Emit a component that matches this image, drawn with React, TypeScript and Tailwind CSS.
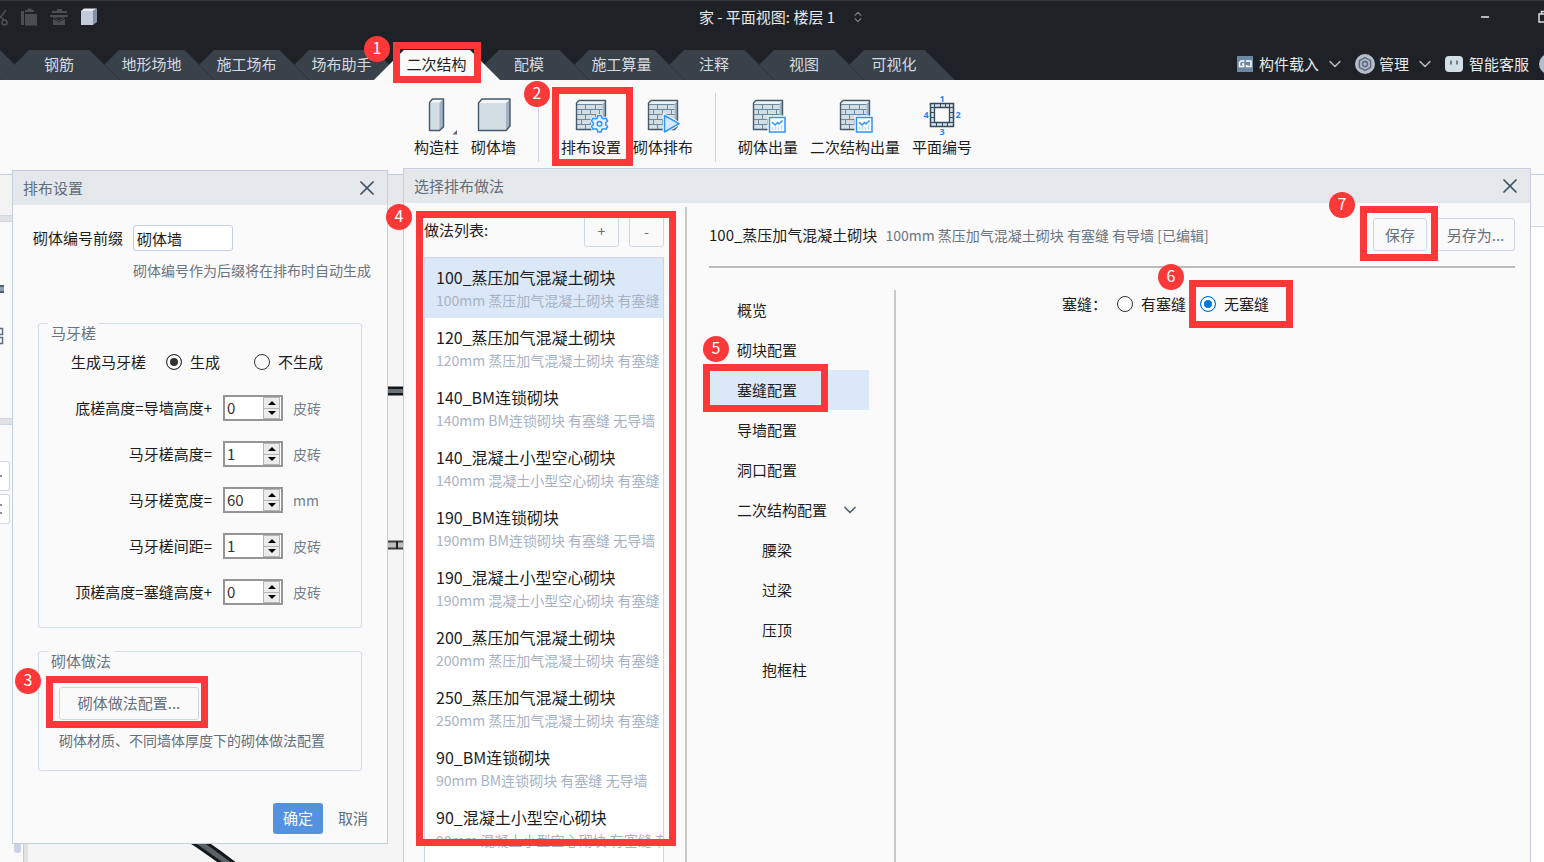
import { useState } from "react";
import type { ReactNode } from "react";
import { ChevronDown, ChevronsUpDown, X } from "lucide-react";

const tabs = ["钢筋", "地形场地", "施工场布", "场布助手", "二次结构", "配模", "施工算量", "注释", "视图", "可视化"];

const methods = [
  { name: "100_蒸压加气混凝土砌块", desc: "100mm 蒸压加气混凝土砌块 有塞缝 有导墙" },
  { name: "120_蒸压加气混凝土砌块", desc: "120mm 蒸压加气混凝土砌块 有塞缝 有导墙" },
  { name: "140_BM连锁砌块", desc: "140mm BM连锁砌块 有塞缝 无导墙" },
  { name: "140_混凝土小型空心砌块", desc: "140mm 混凝土小型空心砌块 有塞缝 有导墙" },
  { name: "190_BM连锁砌块", desc: "190mm BM连锁砌块 有塞缝 无导墙" },
  { name: "190_混凝土小型空心砌块", desc: "190mm 混凝土小型空心砌块 有塞缝 有导墙" },
  { name: "200_蒸压加气混凝土砌块", desc: "200mm 蒸压加气混凝土砌块 有塞缝 有导墙" },
  { name: "250_蒸压加气混凝土砌块", desc: "250mm 蒸压加气混凝土砌块 有塞缝 有导墙" },
  { name: "90_BM连锁砌块", desc: "90mm BM连锁砌块 有塞缝 无导墙" },
  { name: "90_混凝土小型空心砌块", desc: "90mm 混凝土小型空心砌块 有塞缝 有导墙" },
];

const sections = [
  { label: "概览" },
  { label: "砌块配置" },
  { label: "塞缝配置" },
  { label: "导墙配置" },
  { label: "洞口配置" },
  { label: "二次结构配置", open: true },
  { label: "腰梁", child: true },
  { label: "过梁", child: true },
  { label: "压顶", child: true },
  { label: "抱框柱", child: true },
];

const spinRows = [
  { id: "bottom", label: "底槎高度=导墙高度+", value: 0, unit: "皮砖" },
  { id: "height", label: "马牙槎高度=", value: 1, unit: "皮砖" },
  { id: "width", label: "马牙槎宽度=", value: 60, unit: "mm" },
  { id: "gap", label: "马牙槎间距=", value: 1, unit: "皮砖" },
  { id: "top", label: "顶槎高度=塞缝高度+", value: 0, unit: "皮砖" },
];

const ghostButton = "rounded-[3px] border border-[#cfd7e5] bg-[#fafafa] text-[#66707d] hover:bg-white";

// Red outline and step number, placed relative to the control they point at
function Mark({ className }: { className: string }) {
  return <span className={"pointer-events-none absolute z-10 border-[7px] border-[#fc3838] " + className} />;
}

function Badge({ n, className }: { n: number; className: string }) {
  return (
    <span
      className={
        "pointer-events-none absolute z-10 flex size-[26px] items-center justify-center rounded-full bg-[#fc3838] pb-1 text-base leading-6 text-white " +
        className
      }
    >
      {n}
    </span>
  );
}

/* ---------- icons ---------- */

function Column() {
  return (
    <svg viewBox="0 0 36 36" className="size-9 overflow-visible">
      <path d="M14 2h10v28l-3.500 3.500H10.500V5.500z" fill="#d3dde4" />
      <path d="M20.500 5.500 24.500 2v28l-4 3.500z" fill="#9fb3c3" />
      <path d="M10.500 5.500 14 2h10.500l-4 3.500z" fill="#f3f6f8" />
      <path d="M10.500 5.500 13.500 2h11v28l-4 3.500h-10z" fill="none" stroke="#45596b" strokeWidth="1.400" strokeLinejoin="round" />
      <path d="M38 33v4.500h-4.500z" fill="#5d6773" />
    </svg>
  );
}

function Block() {
  return (
    <svg viewBox="0 0 36 36" className="size-9">
      <path d="M2.500 6h28v27.500h-28z" fill="#d3dde4" />
      <path d="M30 6l4-4v27l-4 4.500z" fill="#9fb3c3" />
      <path d="M2.500 5.500 6 2h28l-4 3.500z" fill="#f3f6f8" />
      <path d="M2.500 6 6 2h28v27l-4 4.500H2.500z" fill="none" stroke="#45596b" strokeWidth="1.400" strokeLinejoin="round" />
    </svg>
  );
}

function Bricks({ children }: { children?: ReactNode }) {
  return (
    <svg viewBox="0 0 36 36" className="size-9">
      <path d="M3.500 6.500h26v26h-26z" fill="#d3dde4" />
      <path d="M29.500 6.500 32.500 4v25.500l-3 3z" fill="#9fb3c3" />
      <path d="M3.500 6.500 6 3.500h26.500l-3 3z" fill="#f3f6f8" />
      <path
        d="M3.500 7.500h26M3.500 12.500h26M3.500 17.500h26M3.500 22.500h26M3.500 27.500h26M12.500 7.500v5M22.500 7.500v5M8.500 12.500v5M17.500 12.500v5M26.500 12.500v5M12.500 17.500v5M22.500 17.500v5M8.500 22.500v5M17.500 22.500v5M26.500 22.500v5M12.500 27.500v5M22.500 27.500v5"
        fill="none"
        stroke="#6f889c"
      />
      <path d="M3.500 6 6 3.500h26.500v26l-3 3h-26z" fill="none" stroke="#45596b" strokeWidth="1.400" strokeLinejoin="round" />
      {children}
    </svg>
  );
}

function BricksGear() {
  return (
    <Bricks>
      <path
        d="M24.800 18.500h3.400l.6 2.500 1.600.9 2.500-.8 1.700 2.900-1.900 1.800v1.900l1.900 1.800-1.700 2.900-2.500-.8-1.600.9-.6 2.500h-3.400l-.6-2.500-1.600-.9-2.500.8-1.700-2.900 1.900-1.800v-1.900l-1.900-1.800 1.700-2.900 2.500.8 1.600-.9z"
        fill="#e4f1ff"
        stroke="#fafafa"
        strokeWidth="3"
      />
      <path
        d="M24.800 18.500h3.400l.6 2.500 1.600.9 2.500-.8 1.700 2.900-1.900 1.800v1.900l1.900 1.800-1.700 2.900-2.500-.8-1.600.9-.6 2.500h-3.400l-.6-2.500-1.600-.9-2.500.8-1.700-2.900 1.900-1.800v-1.900l-1.900-1.800 1.700-2.900 2.500.8 1.600-.9z"
        fill="#e4f1ff"
        stroke="#2f93fb"
        strokeWidth="1.500"
        strokeLinejoin="round"
      />
      <circle cx="26.500" cy="26.800" r="2.300" fill="#fff" stroke="#2f93fb" strokeWidth="1.500" />
    </Bricks>
  );
}

function BricksPlay() {
  return (
    <Bricks>
      <path d="M19.500 18.500 34 26.700 19.500 35z" fill="#d6eaff" stroke="#fafafa" strokeWidth="3.500" />
      <path d="M19.500 18.500 34 26.700 19.500 35z" fill="#d6eaff" stroke="#2f93fb" strokeWidth="1.500" strokeLinejoin="round" />
    </Bricks>
  );
}

function BricksChart() {
  return (
    <Bricks>
      <path d="M18.500 19.500h17v16h-17z" fill="#fff" stroke="#fafafa" strokeWidth="2" />
      <path d="M19.500 20.500h15.500v14.500H19.500z" fill="#fff" stroke="#2f93fb" strokeWidth="1.500" />
      <path d="M22.500 30v3M25.500 29v4M28.500 30v3M31.500 28v5" stroke="#b9dbff" strokeWidth="1.500" />
      <path d="m22 25 3 3 2.500-2.500 1.500 1.500 3.500-3.500" fill="none" stroke="#2f93fb" strokeWidth="1.500" />
    </Bricks>
  );
}

function PlanNumber() {
  return (
    <svg viewBox="0 0 36 36" className="size-9 overflow-visible">
      <path d="M6.500 6.500h23v23h-23z" fill="#d3dde4" stroke="#34495c" strokeWidth="1.500" />
      <path d="M10.500 10.500h15v15h-15z" fill="#fafafa" stroke="#34495c" strokeWidth="1.300" />
      <path
        d="M10.500 6.500v4M16.500 6.500v4M21.500 6.500v4M25.500 6.500v4M12.500 25.500v4M18.500 25.500v4M23.500 25.500v4M6.500 10.500h4M6.500 15.500h4M6.500 20.500h4M6.500 25.500h4M25.500 10.500h4M25.500 15.500h4M25.500 20.500h4M25.500 25.500h4"
        stroke="#34495c"
      />
      <g fill="#1f87f5" fontSize="9" fontWeight="700" textAnchor="middle" fontFamily="Noto Sans, sans-serif">
        <text x="18" y="5">1</text>
        <text x="34" y="21">2</text>
        <text x="18" y="38">3</text>
        <text x="2" y="21">4</text>
      </g>
    </svg>
  );
}

/* ---------- header ---------- */

function QuickTools() {
  return (
    <svg viewBox="0 0 100 20" className="h-5 w-[100px]">
      <g fill="none" stroke="#4d5154" strokeWidth="1.500">
        <path d="M6 3 0 11M0 9l4 4" />
        <circle cx="4.500" cy="15.500" r="2.500" />
      </g>
      <g fill="#4a4d50">
        <path d="M21 4h3v14h-3zM25 3h9v2h-9zM27.500 1.500h4v2h-4zM25 7h12v11.500H25z" />
        <path d="M52 4h15v2H52zM57 2h5v2h-5zM50 8h18v2H50zM53 12l6 3 6-3v6H53z" />
      </g>
      <path d="M53 10h12l-6 4z" fill="none" stroke="#4a4d50" />
      <path d="M81 4h12v14H81z" fill="#c3cbdb" />
      <path d="m81 4 3-2.500h13L93 4z" fill="#e6eaf1" />
      <path d="m93 4 4-2.500V15l-4 3z" fill="#8492a8" />
    </svg>
  );
}

function Tab({ label, active, z, onClick }: { label: string; active: boolean; z: number; onClick: () => void }) {
  const width = label.length > 3 ? "w-[126px]" : "w-[121px]";
  return (
    <div className={"relative -ml-[31px] h-[30px] " + width} style={{ zIndex: z }}>
      <button
        onClick={onClick}
        className={
          "size-full pr-px [clip-path:polygon(30px_0,calc(100%-30px)_0,100%_100%,0_100%)] " +
          (active ? "bg-[#fafafa] text-[#1d1d1d]" : "bg-[#2c333b] text-[#d6dbe1]")
        }
      >
        <span
          className={
            "flex size-full items-center justify-center pb-[2px] [clip-path:polygon(30px_0,calc(100%-30px)_0,100%_100%,0_100%)] " +
            (active ? "bg-[#fafafa]" : "bg-[#39414a]")
          }
        >
          {label}
        </span>
      </button>
      {active && (
        <>
          <Mark className="inset-x-[19px] -top-2 -bottom-[3px]" />
          <Badge n={1} className="-left-[10px] -top-[14px]" />
        </>
      )}
    </div>
  );
}

function Header() {
  const [active, setActive] = useState("二次结构");
  return (
    <header className="relative z-20 flex h-20 flex-col justify-between border-t border-[#33393c] bg-[#1e2226] text-[#e8eaed]">
      <div className="grid h-8 grid-cols-[1fr_auto_1fr] items-center">
        <QuickTools />
        <div className="flex items-center gap-4 pl-5">
          <h1>家 - 平面视图: 楼层 1</h1>
          <ChevronsUpDown className="size-[14px] text-[#7d8287]" />
        </div>
        <div className="flex items-center justify-end gap-12">
          <button aria-label="最小化" className="flex h-4 w-2 items-center">
            <span className="h-[2px] w-2 bg-[#b5b8bb]" />
          </button>
          <button aria-label="还原" className="-mr-[7px]">
            <svg viewBox="0 0 14 14" className="size-[14px]" fill="none" stroke="#d8dadc" strokeWidth="1.500">
              <path d="M2 4h8v8H2zM4.500 4V1.500H13V10h-3" />
            </svg>
          </button>
        </div>
      </div>

      <div className="flex items-end">
        <div className="-ml-[91px] h-[30px] w-[121px] shrink-0 bg-[#39414a] [clip-path:polygon(30px_0,calc(100%-30px)_0,100%_100%,0_100%)]" />
        <nav className="isolate flex">
          {tabs.map((t, i) => (
            <Tab key={t} label={t} active={t === active} z={t === active ? 20 : tabs.length - i} onClick={() => setActive(t)} />
          ))}
        </nav>
        <div className="-mr-[15px] ml-auto flex h-8 items-center">
          <button className="flex items-center gap-[6px]">
            <svg viewBox="0 0 16 16" className="size-4">
              <path d="M0 0h16v16H0z" fill="#6d89a3" />
              <path d="M7.500 5H4L2.500 6.500v4h4V8H5M9 5h5v5.500h-4.500V9" fill="none" stroke="#fff" strokeWidth="1.500" />
            </svg>
            构件载入
          </button>
          <ChevronDown className="mx-[6px] size-5 text-[#b9bdc2]" strokeWidth={1.75} />
          <button className="ml-1 flex items-center gap-1">
            <svg viewBox="0 0 20 20" className="size-5">
              <circle cx="10" cy="10" r="10" fill="#b4bdcc" />
              <path d="m10 3.500 5.600 3.200v6.600L10 16.500l-5.600-3.200V6.700z" fill="#aab5c6" stroke="#5a6678" strokeWidth="1.300" />
              <circle cx="10" cy="10" r="2.500" fill="none" stroke="#5a6678" strokeWidth="1.300" />
            </svg>
            管理
          </button>
          <ChevronDown className="mx-[6px] size-5 text-[#b9bdc2]" strokeWidth={1.75} />
          <button className="ml-1 flex items-center gap-[6px]">
            <svg viewBox="0 0 18 16" className="h-4 w-[18px]">
              <rect width="18" height="16" rx="4" fill="#d3dfe6" />
              <path d="M6 4.500v4M12 4.500v4" stroke="#3c4650" strokeWidth="1.300" />
            </svg>
            智能客服
          </button>
          <span className="ml-[10px] size-5 rounded-full bg-[#b4bdcc]" />
        </div>
      </div>
    </header>
  );
}

function RibbonButton({ label, children, mark }: { label: string; children: ReactNode; mark?: boolean }) {
  return (
    <div className="relative">
      <button className="flex h-full flex-col items-center gap-1 px-[6px] pt-[17px] leading-5">
        {children}
        {label}
      </button>
      {mark && (
        <>
          <Mark className="-left-[3px] -right-[6px] bottom-2 top-[7px]" />
          <Badge n={2} className="-left-[31px] top-px" />
        </>
      )}
    </div>
  );
}

function Ribbon() {
  const divider = <span className="mx-4 mb-3 mt-[13px] w-px bg-[#cdd6e4]" />;
  return (
    <div className="relative flex h-[95px] shrink-0 border-b border-[#c5cde0] bg-[#fafafa] pl-[408px] text-[#1d1d1d]">
      <RibbonButton label="构造柱"><Column /></RibbonButton>
      <RibbonButton label="砌体墙"><Block /></RibbonButton>
      {divider}
      <RibbonButton label="排布设置" mark><BricksGear /></RibbonButton>
      <RibbonButton label="砌体排布"><BricksPlay /></RibbonButton>
      {divider}
      <RibbonButton label="砌体出量"><BricksChart /></RibbonButton>
      <RibbonButton label="二次结构出量"><BricksChart /></RibbonButton>
      <RibbonButton label="平面编号"><PlanNumber /></RibbonButton>
    </div>
  );
}

/* ---------- drawing area behind the dialogs ---------- */

function Workspace() {
  return (
    <div className="flex min-h-0 flex-1">
      <aside className="flex w-6 shrink-0 flex-col border-r border-[#c9cdd3] bg-[#fafafa]">
        <div className="h-10 bg-[#f3f3f3]" />
        <div className="h-[7px] border-y border-[#cfd7e5] bg-[#e2e2e2]" />
        <div className="h-[196px] pt-[63px]">
          <div className="h-2 w-1 border-y-2 border-[#4b6072] bg-[#8aa1b4]" />
          <svg viewBox="0 0 4 18" className="mt-[34px] h-[18px] w-1" fill="none" stroke="#5b7080" strokeWidth="1.500">
            <path d="M-3 1.500h5.500v6H-3zM-3 10.500h5.500v6H-3z" />
          </svg>
        </div>
        <div className="h-[7px] border-y border-[#cfd7e5] bg-[#e2e2e2]" />
        <div className="mt-9 flex h-[30px] w-[10px] items-center rounded-r-[3px] border border-l-0 border-[#cfd7e5] bg-white">
          <span className="h-[2px] w-[2px] bg-[#8b929a]" />
        </div>
        <div className="mt-[3px] flex h-[30px] w-[10px] items-center rounded-r-[3px] border border-l-0 border-[#cfd7e5] bg-white">
          <span className="h-[10px] w-[2px] border-y-2 border-[#8b929a]" />
        </div>
        <div className="mb-[9px] ml-[14px] mt-auto h-4 w-[7px] rounded-b-[3px] bg-[#cbd3e2]" />
      </aside>
      <main className="min-w-0 flex-1 overflow-hidden border-l-4 border-[#e2e2e2] bg-[#f5f5f5]">
        <div className="h-[30px] bg-[#e4e8eb]" />
        <svg viewBox="0 0 400 660" className="h-[660px] w-[400px]">
          <path d="M340 186h60" stroke="#15181a" strokeWidth="9" />
          <path d="M340 186h60" stroke="#6b7378" strokeWidth="4" />
          <path d="M340 340h60" stroke="#3c3f41" strokeWidth="9" />
          <path d="M340 340h60" stroke="#bfbfbf" strokeWidth="5" />
          <path d="M369 336v8" stroke="#222" strokeWidth="2" />
          <path d="M150 624q36 22 70 50" fill="none" stroke="#15181a" strokeWidth="11" />
          <path d="M150 624q36 22 70 50" fill="none" stroke="#5a6266" strokeWidth="5" />
        </svg>
      </main>
      <aside className="w-[30px] shrink-0 bg-white">
        <div className="h-[52px] border-b border-[#cfd7e5] bg-[#fafafa]" />
      </aside>
    </div>
  );
}

/* ---------- dialogs ---------- */

function DialogTitle({ title }: { title: string }) {
  return (
    <div className="flex h-[34px] shrink-0 items-center justify-between bg-[#e4e8eb] pl-[10px] pr-2 text-[#626c79]">
      <h2>{title}</h2>
      <button aria-label="关闭">
        <X className="size-6 text-[#3d5265]" strokeWidth={1.75} />
      </button>
    </div>
  );
}

function SpinBox({ id, initial }: { id: string; initial: number }) {
  const [value, setValue] = useState(initial);
  return (
    <div className="flex h-[26px] w-[60px] border-2 border-[#959595] bg-white">
      <input
        id={id}
        value={value}
        onChange={(e) => setValue(Number(e.target.value) || 0)}
        className="w-0 flex-1 pl-[2px] text-[#333] outline-none"
      />
      <div className="mr-px flex w-[17px] flex-col">
        <button aria-label="增加" onClick={() => setValue(value + 1)} className="flex flex-1 items-center justify-center border border-[#b5b5b5] bg-[#ececec]">
          <svg viewBox="0 0 8 4" className="h-1 w-2"><path d="m4 0 4 4H0z" /></svg>
        </button>
        <button aria-label="减少" onClick={() => setValue(value - 1)} className="flex flex-1 items-center justify-center border border-t-0 border-[#b5b5b5] bg-[#ececec]">
          <svg viewBox="0 0 8 4" className="h-1 w-2"><path d="m4 4 4-4H0z" /></svg>
        </button>
      </div>
    </div>
  );
}

function Radio({ name, label, checked, onChange, accent }: any) {
  return (
    <label className="flex items-center gap-2">
      <input
        type="radio"
        name={name}
        checked={checked}
        onChange={onChange}
        className={
          "size-4 appearance-none rounded-full border bg-white checked:shadow-[inset_0_0_0_3px_#fff] " +
          (accent
            ? "border-[#333] checked:border-[#0078d7] checked:bg-[#0078d7]"
            : "border-[#333] checked:bg-[#333]")
        }
      />
      {label}
    </label>
  );
}

function LayoutSettings() {
  const [teeth, setTeeth] = useState(true);
  return (
    <section className="absolute left-3 top-[170px] w-[376px] border border-[#c5cde0] bg-[#fafafa] text-[#1d1d1d]">
      <DialogTitle title="排布设置" />
      <div className="pl-5 pt-5">
        <div className="flex items-center gap-[10px]">
          <label htmlFor="prefix">砌体编号前缀</label>
          <input id="prefix" defaultValue="砌体墙" className="h-[26px] w-[100px] rounded-[3px] border border-[#c5cfe3] bg-white px-[3px]" />
        </div>
        <p className="ml-[100px] mt-[9px] text-sm text-[#6b7582]">砌体编号作为后缀将在排布时自动生成</p>
      </div>

      <fieldset className="mx-[25px] mt-[23px] min-w-0 rounded-[3px] border border-[#d3daea] pb-[22px]">
        <legend className="ml-[9px] px-[3px] pt-5 leading-5 text-[#6b7582]">马牙槎</legend>
        <div className="flex flex-col gap-5 pl-8 pt-[6px]">
          <div className="flex h-[26px] items-center">
            <span className="mr-5">生成马牙槎</span>
            <Radio name="teeth" label="生成" checked={teeth} onChange={() => setTeeth(true)} />
            <span className="w-[34px]" />
            <Radio name="teeth" label="不生成" checked={!teeth} onChange={() => setTeeth(false)} />
          </div>
          {spinRows.map((row) => (
            <div key={row.id} className="flex items-center">
              <label htmlFor={row.id} className="mr-[11px] w-[141px] whitespace-nowrap text-right">{row.label}</label>
              <SpinBox id={row.id} initial={row.value} />
              <span className="ml-[10px] text-sm text-[#76808c]">{row.unit}</span>
            </div>
          ))}
        </div>
      </fieldset>

      <fieldset className="mx-[25px] mt-[3px] min-w-0 rounded-[3px] border border-[#d3daea] pb-5">
        <legend className="ml-[9px] px-[3px] pt-5 leading-5 text-[#6b7582]">砌体做法</legend>
        <div className="pl-5 pt-4">
          <div className="relative w-[140px]">
            <button className={"h-[33px] w-full pb-[2px] " + ghostButton}>砌体做法配置...</button>
            <Mark className="-bottom-2 -left-[13px] -right-[9px] -top-[11px]" />
            <Badge n={3} className="-left-11 -top-[19px]" />
          </div>
          <p className="mt-[10px] whitespace-nowrap text-sm text-[#66707d]">砌体材质、不同墙体厚度下的砌体做法配置</p>
        </div>
      </fieldset>

      <div className="flex justify-end gap-[15px] pb-[9px] pr-[19px] pt-8">
        <button className="h-[31px] w-[50px] rounded-[3px] bg-[#5292e0] pb-[2px] text-white">确定</button>
        <button className="pb-[2px] text-[#626c79]">取消</button>
      </div>
    </section>
  );
}

function MethodDialog() {
  const [selected, setSelected] = useState(0);
  const [section, setSection] = useState("塞缝配置");
  const [sealed, setSealed] = useState(false);
  const method = methods[selected];

  return (
    <section className="absolute bottom-0 left-[403px] right-[13px] top-[168px] flex flex-col border border-b-0 border-[#c5cde0] bg-[#fafafa] text-[#1d1d1d]">
      <DialogTitle title="选择排布做法" />
      <div className="flex min-h-0 flex-1">
        {/* Method list */}
        <div className="relative flex w-[283px] shrink-0 pt-1">
          <div className="flex min-w-0 flex-1 flex-col pl-5 pr-[21px] pt-2">
            <div className="flex justify-between">
              <h3 className="pt-[5px]">做法列表:</h3>
              <div className="flex gap-[10px]">
                <button aria-label="添加" className={"h-8 w-[35px] text-sm " + ghostButton}>+</button>
                <button aria-label="删除" className={"h-8 w-[35px] text-sm " + ghostButton}>-</button>
              </div>
            </div>
            <ul className="mt-[10px] min-h-0 flex-1 overflow-hidden border border-b-0 border-[#cdd6e8] bg-white">
              {methods.map((m, i) => (
                <li key={m.name}>
                  <button
                    onClick={() => setSelected(i)}
                    className={
                      "flex h-[60px] w-full flex-col overflow-hidden whitespace-nowrap pl-[11px] pt-[7px] text-left " +
                      (i === selected ? "bg-[#dbe8f8]" : "")
                    }
                  >
                    <span className="text-base leading-6">{m.name}</span>
                    <span className="text-sm leading-[22px] text-[#a7b3c5]">{m.desc}</span>
                  </button>
                </li>
              ))}
            </ul>
          </div>
          <div className="w-[2px] bg-[#c9c9c9]" />
          <Mark className="bottom-4 left-3 right-[11px] top-2" />
          <Badge n={4} className="-left-[18px] top-px" />
        </div>

        {/* Method editor */}
        <div className="flex min-w-0 flex-1 flex-col pl-[22px] pr-[15px]">
          <div className="flex items-center border-b-2 border-[#bcbcbc] pb-[15px] pt-[15px]">
            <h3>{method.name}</h3>
            <span className="ml-2 text-sm text-[#6b7582]">{method.desc} [已编辑]</span>
            <div className="relative ml-auto">
              <button className={"h-[33px] w-[54px] " + ghostButton}>保存</button>
              <Mark className="-bottom-[10px] -left-[13px] -right-[11px] -top-3" />
              <Badge n={7} className="-left-[44px] -top-[26px]" />
            </div>
            <button className={"ml-[9px] h-[33px] w-[79px] " + ghostButton}>另存为...</button>
          </div>

          <div className="flex min-h-0 flex-1 pt-[22px]">
            <nav className="w-40">
              {sections.map((s) => (
                <div key={s.label} className="relative">
                  <button
                    onClick={() => setSection(s.label)}
                    className={
                      "flex h-10 w-full items-center " +
                      (s.child ? "pl-[53px] " : "pl-7 ") +
                      (s.label === section ? "bg-[#dbe8f8]" : "")
                    }
                  >
                    {s.label}
                    {s.open && <ChevronDown className="ml-[13px] size-5 text-[#4b5f71]" strokeWidth={2} />}
                  </button>
                  {s.label === "塞缝配置" && (
                    <>
                      <Mark className="-bottom-[2px] -left-[6px] -top-[6px] w-[125px]" />
                      <Badge n={5} className="-left-[6px] -top-[34px]" />
                    </>
                  )}
                </div>
              ))}
            </nav>
            <div className="ml-[25px] w-[2px] bg-[#c9c9c9]" />
            <div className="flex h-7 items-center pl-[166px]">
              <span className="mr-[10px]">塞缝：</span>
              <Radio name="seal" label="有塞缝" accent checked={sealed} onChange={() => setSealed(true)} />
              <div className="relative ml-[14px]">
                <Radio name="seal" label="无塞缝" accent checked={!sealed} onChange={() => setSealed(false)} />
                <Mark className="-bottom-[14px] -left-[11px] -right-6 -top-[14px]" />
                <Badge n={6} className="-left-[42px] -top-[30px]" />
              </div>
            </div>
          </div>
        </div>
      </div>
    </section>
  );
}

export default function App() {
  return (
    <div className="relative flex h-screen flex-col overflow-hidden bg-[#f5f5f5] font-['Noto_Sans_CJK_SC',sans-serif] text-[15px] leading-5">
      <Header />
      <Ribbon />
      <Workspace />
      <LayoutSettings />
      <MethodDialog />
    </div>
  );
}
